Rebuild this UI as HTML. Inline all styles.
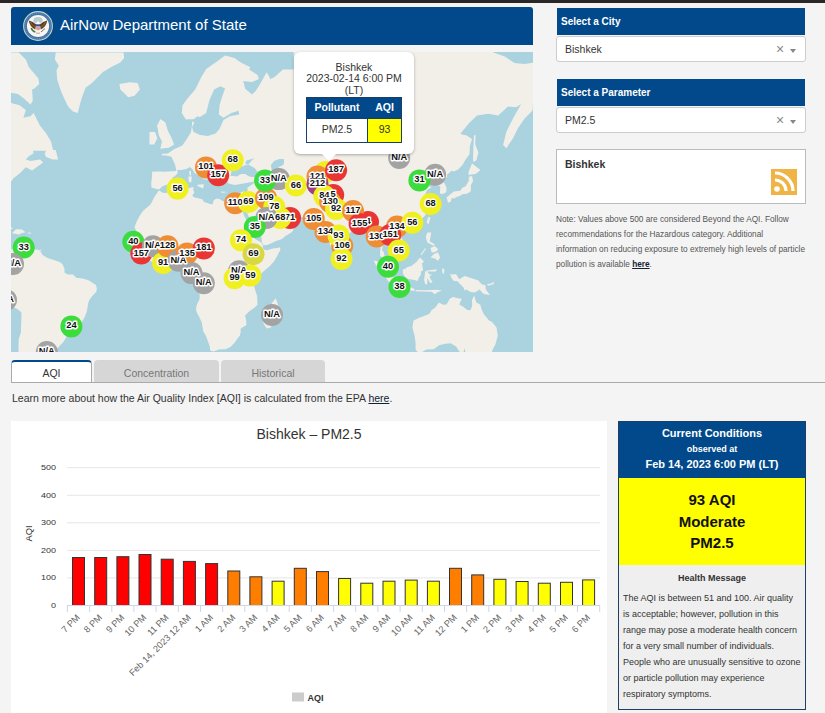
<!DOCTYPE html>
<html><head><meta charset="utf-8">
<style>
*{box-sizing:border-box;margin:0;padding:0}
html,body{width:825px;height:713px;overflow:hidden;background:#f4f4f4;font-family:"Liberation Sans",sans-serif;color:#333}
.abs{position:absolute}
#topbar{left:0;top:0;width:825px;height:3px;background:#2b2726}
#hdr{left:11px;top:7px;width:522px;height:38px;background:#01498b;border-radius:3px 3px 0 0}
#hdr .t{position:absolute;left:49px;top:8.5px;font-size:15px;color:#fff;line-height:17px;white-space:nowrap}
#map{left:11px;top:52px;width:522px;height:300px;overflow:hidden;background:#aad3df}
#popup{left:294px;top:52px;width:120px;height:102px;background:#fff;border-radius:6px;box-shadow:0 1px 3px rgba(0,0,0,.3);text-align:center;font-size:10.5px;color:#333;line-height:11.5px}
#tip{left:321.5px;top:153.5px;width:0;height:0;border-left:7.5px solid transparent;border-right:7.5px solid transparent;border-top:7px solid #fff}
.selh{left:557px;width:248px;height:27px;background:#01498b;color:#fff;font-weight:bold;font-size:10px;padding:8px 0 0 4px;line-height:11px}
.selb{left:556px;width:250px;height:26px;background:#fff;border:1px solid #ccc;border-radius:3px;font-size:10.5px;color:#333;padding:5.5px 0 0 8px;line-height:12px}
.selb .x{position:absolute;left:219px;top:4.5px;font-size:14px;color:#888;line-height:14px}
.selb .c{position:absolute;left:233px;top:11.5px;width:0;height:0;border-left:3.5px solid transparent;border-right:3.5px solid transparent;border-top:4px solid #888}
#rss{left:556px;top:149px;width:250px;height:55px;background:#fff;border:1px solid #bbb}
#rss .n{position:absolute;left:8px;top:8px;font-size:10.5px;font-weight:bold;color:#333}
#note{left:556px;top:212px;width:250px;font-size:8.25px;line-height:15px;color:#555}
#note b{color:#123;text-decoration:underline}
.tab{top:360px;height:23px;font-size:10.5px;text-align:center;line-height:13px;padding-top:6.5px;color:#777;background:#d6d6d6;border-radius:4px 4px 0 0}
#learn{left:12px;top:392px;font-size:10.5px;color:#333;white-space:nowrap;line-height:13px}
#learn u{color:#123}
#chartbox{left:11px;top:421px;width:596px;height:292px;background:#fff}
#cc{left:618px;top:421px;width:188px;height:289px;border:1px solid #1b3f66;background:#efefef}
</style></head><body>
<div id="topbar" class="abs"></div>
<div id="hdr" class="abs">
<svg class="abs" style="left:12px;top:4px" width="30" height="30" viewBox="0 0 30 30">
<circle cx="15" cy="15" r="14.4" fill="#4472a8" stroke="#b9d8c6" stroke-width="1.1"/>
<circle cx="15" cy="15" r="12.6" fill="none" stroke="#8fb0d0" stroke-width="0.6" stroke-dasharray="1 1.2"/>
<circle cx="15" cy="15" r="11.1" fill="#f7f7f2"/>
<ellipse cx="15" cy="9.3" rx="4.6" ry="3.2" fill="#b9ccd2"/>
<path d="M5.8,9.5 Q6.5,15.5 12.3,18.5 L13.2,13.5 Q10,10.5 5.8,9.5Z" fill="#5e3c1c"/>
<path d="M24.2,9.5 Q23.5,15.5 17.7,18.5 L16.8,13.5 Q20,10.5 24.2,9.5Z" fill="#5e3c1c"/>
<path d="M7.5,11 Q9,14.5 12,16" stroke="#a07a48" stroke-width="0.7" fill="none"/>
<path d="M22.5,11 Q21,14.5 18,16" stroke="#a07a48" stroke-width="0.7" fill="none"/>
<circle cx="15" cy="11.8" r="1.6" fill="#fff"/>
<rect x="12.6" y="13.3" width="4.8" height="2.2" fill="#33528c"/>
<path d="M12.6,15.5 h4.8 v2.6 q-2.4,2.8 -4.8,0 Z" fill="#e09c9a"/>
<path d="M8.2,17 q1.2,3.5 4.2,4" stroke="#4d7d3a" stroke-width="1.6" fill="none"/>
<path d="M18,21 L22,17.5" stroke="#7a6a5a" stroke-width="1" fill="none"/>
<path d="M13,21.5 h4 v1.5 h-4z" fill="#c8c0c8"/>
</svg>
<div class="t">AirNow Department of State</div>
</div>
<div id="map" class="abs"><svg width="522" height="300" viewBox="0 0 522 300" style="position:absolute;left:0;top:0">
<rect width="522" height="300" fill="#aad3df"/>
<path fill="#f2efe9" d="M148.0,137.4L144.0,136.5L140.5,135.7L140.2,131.0L141.1,124.0L141.1,119.7L147.0,119.4L153.2,119.7L165.4,119.1L164.2,113.0L160.5,104.8L155.0,103.5L150.2,103.3L151.5,101.8L156.9,101.5L163.0,97.2L171.4,93.6L176.3,86.3L179.9,80.3L181.1,73.0L181.0,68.1L174.7,67.3L170.8,61.0L171.5,53.2L176.3,46.8L184.2,37.4L190.5,24.8L195.2,16.9L204.6,10.6L214.1,3.5L223.5,5.9L229.8,10.6L239.3,15.3L238.1,17.4L246.8,23.2L247.8,27.1L241.0,30.0L232.3,29.0L234.2,36.8L241.0,42.6L244.9,38.7L249.7,31.0L255.6,20.3L257.5,23.2L259.4,27.1L263.3,25.2L272.0,17.4L282.7,17.4L282.7,-2.0L402.9,-2.0L482.3,-2.0L482.3,0.5L493.7,4.5L503.5,11.1L513.4,11.9L524.8,10.3L524.8,13.5L521.5,58.5L513.4,66.7L506.8,76.5L501.9,86.4L495.4,96.2L492.1,92.9L495.4,79.8L501.9,66.7L510.1,52.0L505.2,55.3L497.0,54.5L487.2,63.5L477.4,61.8L465.9,63.5L457.7,71.6L449.5,81.5L454.5,84.7L457.7,98.0L415.3,97.3L330.1,113.1L255.7,127.5L223.7,133.0L202.5,127.5L170.5,127.5L151.4,134.3ZM46.3,0.4L112.5,0.4L113.2,5.9L109.3,10.6L99.8,15.3L92.0,20.1L87.2,24.8L80.9,31.1L74.6,35.8L71.5,43.7L69.1,51.6L66.8,61.0L62.0,59.5L57.3,54.7L52.6,45.3L49.4,37.4L46.3,27.9L45.5,18.5L47.8,13.8L43.9,7.5L44.7,0.4ZM108.5,31.9L118.8,30.3L126.6,31.1L129.0,37.4L123.5,43.7L117.2,45.3L112.5,40.5L109.3,37.4ZM-1.0,0.4L7.7,0.4L14.8,7.5L17.9,15.3L27.4,26.4L28.2,31.9L23.4,36.6L21.1,37.4L21.8,48.4L19.5,52.4L13.2,46.8L6.9,42.1L-1.0,40.5ZM-1.0,50.8L8.5,53.2L14.8,57.9L12.4,65.8L19.5,64.2L22.6,61.0L25.8,67.3L28.9,73.6L35.2,81.5L40.0,89.4L42.3,98.8L-1.0,98.8ZM149.5,67.3L154.2,70.5L156.6,78.4L160.5,86.2L162.9,92.5L157.4,95.7L149.5,96.5L151.1,89.4L147.9,83.1L146.3,73.6ZM138.5,79.9L144.0,79.9L146.3,86.2L143.2,92.5L138.5,92.5L138.5,86.2ZM-1.0,96.4L21.1,96.4L22.6,101.2L17.9,104.3L14.8,107.5L19.5,109.0L28.9,107.5L32.1,110.6L21.1,118.5L14.8,115.3L8.5,121.6L2.2,126.4L-1.0,131.1ZM35.2,98.0L44.7,98.0L47.1,107.5L41.5,107.5L35.2,105.1L33.7,101.9ZM148.6,138.6L151.4,140.4L155.6,140.7L158.6,139.1L162.0,137.0L166.3,136.2L172.7,135.7L178.4,135.9L181.0,134.9L183.3,135.4L182.2,137.3L183.5,140.4L181.4,143.8L183.5,145.3L188.0,146.3L192.0,147.6L192.9,149.8L198.2,151.6L201.4,152.3L202.5,148.3L205.7,146.3L208.8,147.1L211.0,148.6L213.1,149.6L217.8,150.1L223.5,150.6L225.9,149.6L228.6,150.3L229.1,153.8L231.8,160.3L233.3,163.9L235.4,167.9L236.9,171.3L238.6,174.8L239.1,178.0L241.8,182.0L244.0,186.9L247.6,188.9L250.3,190.4L252.0,193.5L251.8,195.6L253.1,197.8L255.7,198.3L262.0,196.5L266.3,195.9L269.1,195.2L269.3,198.3L268.0,200.2L265.9,204.5L263.1,209.2L258.9,214.1L256.3,216.2L253.5,218.4L250.3,221.4L246.1,225.8L244.4,229.0L242.5,233.3L243.5,235.0L244.4,238.7L246.1,244.0L246.5,252.8L242.9,256.1L238.4,259.2L234.0,263.5L235.2,268.5L235.4,273.1L230.1,276.2L229.3,277.8L229.9,279.0L228.8,283.8L225.9,287.2L223.7,290.7L219.3,294.9L214.4,297.2L207.8,297.5L202.5,299.6L199.3,298.5L199.1,297.2L198.6,293.7L196.7,288.7L195.0,284.0L192.2,279.2L191.6,275.5L190.8,270.6L188.6,265.8L186.5,261.7L185.0,258.3L185.6,253.2L188.4,247.5L188.8,244.0L188.0,239.3L186.1,233.3L183.3,228.6L180.1,225.8L178.4,221.8L179.9,219.6L180.1,216.2L180.5,212.0L178.4,210.9L175.9,210.9L172.7,211.3L170.1,207.7L167.1,206.9L163.1,207.3L159.5,208.8L155.6,210.3L151.4,209.2L148.2,209.8L143.9,211.1L140.7,209.8L136.9,207.1L134.4,204.9L131.8,202.3L130.7,200.2L128.0,197.0L124.8,194.8L124.4,192.6L122.7,188.9L124.1,187.1L125.9,181.6L125.4,179.3L123.5,175.2L125.9,169.0L129.0,163.2L132.4,158.6L139.5,152.6L143.7,144.5L147.6,138.8ZM236.5,135.7L255.7,121.9L287.6,79.8L394.0,68.2L455.7,83.5L461.0,87.0L458.9,94.0L458.5,102.2L454.6,107.6L451.4,113.1L447.2,117.5L442.9,119.6L440.6,118.7L438.0,121.0L436.1,122.4L436.1,124.7L433.3,127.5L431.2,129.7L433.6,131.6L435.5,135.7L435.3,139.6L434.4,140.7L431.2,142.0L428.9,141.4L429.1,138.3L429.3,134.6L427.0,133.5L425.5,133.0L426.3,130.3L424.4,127.8L419.9,129.7L418.0,130.3L419.9,126.1L417.4,125.0L414.2,127.5L410.4,130.3L411.0,131.6L413.1,135.1L416.3,134.1L420.6,134.9L415.9,138.3L414.2,142.2L417.0,147.3L418.5,151.1L419.3,153.5L416.3,158.4L414.2,163.2L411.0,166.7L407.8,170.2L402.9,171.8L398.2,173.0L395.7,173.6L394.6,176.4L393.3,173.6L389.7,173.6L387.0,175.2L384.8,179.3L386.5,182.7L390.1,186.0L391.6,187.6L392.5,190.9L392.3,194.3L391.9,195.9L388.7,198.0L386.5,200.2L383.3,201.9L382.3,198.0L379.1,197.4L378.0,194.8L374.8,193.3L373.8,191.5L372.7,191.9L371.6,194.8L371.0,198.0L372.7,200.2L373.8,204.5L374.8,206.0L377.4,207.5L379.7,209.8L379.9,212.0L381.9,217.3L380.1,217.7L377.0,215.8L374.8,214.1L373.3,209.0L371.6,206.6L369.1,203.4L369.1,199.1L369.5,195.9L369.5,191.5L368.0,189.3L367.6,184.9L364.6,184.2L363.1,186.5L360.4,186.0L360.6,181.6L358.9,178.2L356.7,176.4L355.7,173.9L355.3,171.8L353.5,171.3L351.4,172.5L347.8,173.2L345.0,173.6L344.6,175.9L341.8,178.2L337.2,182.2L333.3,185.3L330.6,187.1L330.8,192.4L329.7,195.9L328.7,198.5L326.3,201.7L324.8,203.2L323.8,202.3L322.1,199.1L320.6,195.9L319.1,192.8L316.9,187.1L315.2,182.7L314.8,179.3L314.4,174.1L310.6,175.5L308.9,171.3L306.7,171.8L305.7,169.5L303.5,168.3L302.5,166.0L301.4,164.6L297.2,165.1L292.5,165.3L290.8,165.1L285.5,164.6L281.8,163.7L279.7,160.3L275.9,161.8L272.7,161.3L269.5,158.6L268.0,156.0L264.2,153.0L262.0,152.6L262.0,154.8L263.1,157.2L264.2,159.6L266.3,162.0L267.4,165.5L268.9,162.9L269.5,164.4L269.7,167.2L271.6,167.4L274.8,167.4L277.6,164.8L279.7,162.2L279.7,165.8L281.2,167.9L284.6,168.8L287.2,171.3L283.3,175.9L281.2,179.8L278.0,182.0L274.8,183.8L271.0,186.9L264.4,189.3L259.9,191.5L255.7,193.0L252.5,193.3L251.0,190.4L250.3,184.9L246.1,179.3L243.3,173.6L238.6,166.7L236.1,160.8L234.0,158.4L234.2,154.8L229.1,153.8ZM264.8,246.2L267.4,253.9L265.9,257.2L263.7,263.9L262.0,268.5L259.9,275.5L255.7,276.6L252.7,272.0L252.0,267.4L254.4,262.8L253.5,257.2L258.9,254.5L262.0,249.5ZM-10.3,201.3L-4.0,202.3L-0.8,198.0L2.4,196.5L6.7,194.3L7.7,197.0L8.8,195.2L10.9,195.9L15.2,198.0L19.5,197.8L25.8,197.6L28.0,198.0L30.1,200.2L31.2,202.8L36.5,206.0L42.9,207.9L48.6,210.1L51.4,212.0L53.5,216.7L53.5,220.5L56.7,222.6L62.0,222.6L65.2,225.8L72.7,226.7L78.0,228.4L82.2,231.2L85.0,232.9L85.8,235.9L85.4,239.7L81.2,244.0L78.0,248.4L76.9,252.8L75.8,259.4L73.7,265.1L70.5,270.8L68.0,270.8L64.1,272.7L59.9,275.0L56.7,279.0L56.1,283.8L52.4,289.9L49.2,293.2L46.1,296.7L43.9,299.6L40.7,299.8L38.6,300.1L35.4,297.5L36.5,302.7L7.5,302.7L7.5,294.9L7.7,287.5L9.9,280.2L10.1,272.0L10.5,263.9L10.3,260.3L6.7,257.2L0.3,253.9L-2.5,249.5L-5.0,246.2L-8.2,237.6L-12.5,231.2L-12.5,224.8L-10.3,220.5L-10.3,216.2L-8.2,216.2L-6.1,205.6ZM403.6,268.0L408.9,265.5L413.1,263.9L418.5,261.7L420.6,257.9L423.8,255.9L428.0,250.6L432.3,252.8L435.5,252.6L438.7,246.7L441.9,245.1L448.2,246.4L450.8,246.7L448.2,252.6L452.5,255.0L456.3,257.9L459.5,258.3L461.2,253.9L461.0,248.0L463.1,243.4L465.3,250.6L469.3,252.8L470.6,257.2L472.7,262.1L478.0,268.5L480.8,269.7L485.5,275.5L486.8,283.8L484.4,292.4L481.9,297.0L479.1,305.3L472.7,308.0L466.3,308.0L459.9,308.0L456.8,302.2L454.6,301.4L453.6,296.2L452.5,300.1L448.5,299.8L445.1,294.4L439.7,291.2L434.4,291.7L428.0,293.2L422.7,297.2L415.3,297.5L411.0,300.1L406.7,300.1L404.6,297.5L404.6,291.2L403.6,283.8L401.4,275.5L402.5,268.5ZM438.7,222.6L445.1,222.2L448.2,227.3L453.6,223.9L459.9,226.0L467.4,228.6L470.6,232.2L474.4,233.3L474.8,237.6L479.1,243.0L472.7,241.9L468.5,237.6L465.3,239.7L463.1,240.4L458.9,239.7L455.7,237.6L453.6,238.4L452.5,235.4L446.1,229.0L442.9,229.0L440.8,226.5L439.7,223.7ZM391.9,217.3L394.0,216.9L396.1,215.2L400.4,213.9L405.7,209.8L408.9,205.6L413.1,209.4L411.0,211.3L412.1,218.4L409.9,219.4L409.9,222.6L407.8,225.8L406.7,229.0L403.6,228.0L397.2,226.9L394.0,224.8L391.9,221.6ZM362.7,208.6L367.4,209.4L373.3,215.2L380.1,221.6L382.3,224.8L385.5,227.3L385.0,232.9L382.3,233.1L377.0,229.0L373.3,222.6L369.5,216.9L364.8,213.0ZM383.8,235.0L385.5,233.1L390.8,234.4L396.1,234.1L399.7,235.2L403.6,237.1L403.3,239.1L396.1,238.0L389.7,237.1L384.4,235.4ZM404.6,238.0L413.1,238.2L420.6,238.0L425.9,237.8L430.8,238.4L425.9,240.4L423.8,242.3L420.6,239.7L413.1,239.5L404.6,239.3ZM413.1,228.0L414.2,219.4L416.3,218.4L425.9,217.3L424.8,219.4L416.3,219.4L418.5,222.6L421.6,222.4L418.5,224.3L419.5,226.9L421.6,230.1L419.5,231.2L417.4,228.0L416.3,225.8L416.3,232.2L414.2,232.2ZM431.2,216.2L433.3,217.3L433.3,220.5L431.9,222.2L431.2,219.4ZM475.9,232.2L480.2,231.6L483.4,229.4L482.3,232.2L477.0,233.7ZM416.3,180.4L420.2,180.4L419.5,184.9L418.7,189.3L423.8,192.6L422.7,193.7L416.3,190.4L414.8,185.3ZM419.5,205.6L422.7,202.3L427.0,200.2L429.1,205.6L427.0,208.8L423.8,206.6ZM419.5,195.9L423.8,194.1L427.0,197.0L425.9,199.1L422.7,200.6L420.6,200.2ZM409.5,202.8L414.2,195.9L414.8,197.0L410.6,203.0ZM417.4,164.8L419.5,165.5L417.4,172.5L415.7,170.2ZM391.0,178.9L395.0,176.8L396.1,178.0L392.9,181.1ZM329.7,199.5L332.7,202.3L334.2,205.6L332.3,207.7L330.1,207.7L329.5,203.4ZM435.5,145.3L438.2,143.5L438.7,142.7L442.9,139.6L449.3,138.8L451.4,135.7L454.6,134.3L457.8,128.9L457.8,124.7L461.0,123.9L462.1,128.9L459.9,133.0L459.9,137.0L459.5,139.6L457.4,140.9L455.3,141.7L451.4,142.2L448.2,144.3L446.1,144.8L442.9,146.6L440.8,146.1L439.7,149.8L438.7,150.3L437.0,150.6L436.1,147.3ZM457.8,123.3L457.4,120.4L461.0,111.5L466.3,115.5L469.5,118.1L464.6,121.9L459.9,122.4ZM462.1,103.8L462.5,92.3L463.1,82.7L464.6,83.5L464.2,92.3L467.4,100.6L465.3,108.5L462.1,110.0ZM1.4,180.7L5.0,177.3L10.9,177.5L14.6,180.2L10.9,181.1L7.7,182.5L1.4,181.3ZM16.9,180.4L20.3,180.7L20.1,181.6L16.9,181.6ZM-10.3,170.2L-4.0,172.5L2.2,176.6L-1.8,177.3L-5.4,177.3L-10.3,173.6ZM28.2,198.9L30.3,197.4L30.1,199.1L28.2,199.1Z"/>
<path fill="#aad3df" d="M176.3,67.3L182.6,67.3L186.5,64.2L188.9,65.0L195.2,61.0L198.3,48.4L203.1,37.4L209.4,34.2L214.1,36.6L210.9,45.3L208.6,53.2L207.8,62.6L212.5,65.8L220.4,61.0L227.5,58.7L228.3,62.6L218.8,64.2L212.5,68.1L208.6,76.8L204.6,81.5L196.8,83.9L188.9,83.1L182.6,79.9L181.0,75.2L183.4,70.5ZM148.0,138.3L150.3,136.5L155.6,136.2L158.8,132.2L160.3,128.9L161.6,125.5L164.6,123.6L166.7,121.0L166.3,118.1L170.1,118.1L175.4,116.9L178.8,114.9L181.8,117.5L183.3,120.7L186.5,122.4L190.1,125.3L193.3,127.5L193.9,133.0L196.1,130.3L196.5,126.1L199.3,127.2L196.1,124.4L193.5,122.1L189.7,120.4L188.2,116.6L186.1,114.6L186.1,111.9L189.3,111.2L190.8,113.1L193.9,117.5L198.4,120.1L201.4,122.4L201.2,126.7L202.9,129.2L204.6,132.2L206.1,136.2L207.8,137.3L208.8,134.6L211.0,133.0L209.5,129.7L208.0,126.1L211.0,125.3L215.2,125.3L216.3,126.7L215.9,128.9L217.4,131.9L218.2,135.7L219.9,136.5L225.2,135.9L229.7,138.0L233.5,136.2L236.9,136.7L236.1,139.6L235.4,143.8L234.4,146.6L233.7,149.1L232.7,150.3L228.6,150.3L225.9,149.6L223.5,150.6L217.8,150.1L213.1,149.6L211.0,148.6L208.8,147.1L205.7,146.3L202.5,148.3L201.4,152.3L198.2,151.6L192.9,149.8L192.0,147.6L188.0,146.3L183.5,145.3L181.4,143.8L183.5,140.4L182.2,137.3L183.3,135.4L181.0,134.9L178.4,135.9L172.7,135.7L166.3,136.2L162.0,137.0L158.6,139.1L155.6,140.7L151.4,140.4L148.6,138.6ZM219.5,124.1L220.8,117.8L221.0,115.2L223.1,112.5L225.2,108.5L228.0,108.5L231.2,110.0L229.1,111.9L231.2,114.6L235.4,112.8L237.6,112.5L240.8,114.6L242.9,115.5L245.0,117.8L248.4,123.0L245.0,125.0L240.8,125.0L237.1,123.9L234.4,121.9L230.1,122.1L225.9,124.4L222.0,124.1ZM235.4,108.5L240.8,106.9L243.3,106.3L240.8,108.5L237.8,111.9L235.4,112.2L234.4,110.9ZM259.9,113.1L263.1,109.1L264.2,108.5L268.4,106.9L272.7,106.9L273.1,109.1L272.7,112.5L269.1,114.6L267.4,114.9L269.1,118.4L271.6,121.9L272.3,124.1L274.8,125.3L273.7,127.5L274.4,131.6L274.4,134.9L268.4,136.5L265.2,134.9L264.0,131.6L265.2,126.9L266.9,126.7L265.2,125.5L262.0,121.9L261.0,119.0L260.3,115.7ZM262.0,153.0L264.2,153.3L267.4,155.5L269.5,158.6L272.7,161.3L275.9,161.8L279.7,160.3L280.1,162.5L279.7,164.4L277.6,164.8L274.8,167.4L271.6,167.4L269.7,167.2L269.5,164.4L268.9,162.9L267.4,165.5L266.3,162.0L264.2,159.6L263.1,157.2Z"/>
<path fill="#f2efe9" d="M186.3,132.7L193.1,132.2L192.0,136.5L186.5,134.1ZM177.3,124.4L180.8,124.4L180.3,130.3L178.0,130.3ZM178.2,119.0L179.9,119.0L180.1,123.6L178.6,123.3ZM209.9,139.4L215.9,140.1L211.0,140.9ZM228.6,140.9L233.5,139.1L231.2,142.0L228.8,141.7ZM149.5,67.3L154.2,70.5L156.6,78.4L160.5,86.2L162.9,92.5L157.4,95.7L149.5,96.5L151.1,89.4L147.9,83.1L146.3,73.6Z"/>
</svg><svg width="522" height="300" style="position:absolute;left:0;top:0">
<circle cx="12.7" cy="195.5" r="11" fill="#3ddc3d"/>
<circle cx="2.0" cy="212.0" r="11" fill="#a3a3a3"/>
<circle cx="-5.0" cy="248.0" r="11" fill="#a3a3a3"/>
<circle cx="60.4" cy="274.4" r="11" fill="#3ddc3d"/>
<circle cx="35.8" cy="300.0" r="11" fill="#a3a3a3"/>
<circle cx="122.3" cy="189.8" r="11" fill="#3ddc3d"/>
<circle cx="130.3" cy="201.5" r="11" fill="#ea3535"/>
<circle cx="141.9" cy="194.2" r="11" fill="#a3a3a3"/>
<circle cx="152.1" cy="210.9" r="11" fill="#f0f020"/>
<circle cx="156.5" cy="194.2" r="11" fill="#ee8d34"/>
<circle cx="167.4" cy="208.7" r="11" fill="#a3a3a3"/>
<circle cx="176.1" cy="201.5" r="11" fill="#ee8d34"/>
<circle cx="192.8" cy="196.4" r="11" fill="#ea3535"/>
<circle cx="180.5" cy="221.1" r="11" fill="#a3a3a3"/>
<circle cx="192.8" cy="231.3" r="11" fill="#a3a3a3"/>
<circle cx="166.6" cy="136.6" r="11" fill="#f0f020"/>
<circle cx="195.0" cy="115.4" r="11" fill="#ee8d34"/>
<circle cx="207.2" cy="123.3" r="11" fill="#ea3535"/>
<circle cx="221.7" cy="108.2" r="11" fill="#f0f020"/>
<circle cx="224.2" cy="151.2" r="11" fill="#ee8d34"/>
<circle cx="237.5" cy="150.0" r="11" fill="#f0f020"/>
<circle cx="255.0" cy="146.3" r="11" fill="#ee8d34"/>
<circle cx="267.8" cy="127.1" r="11" fill="#a3a3a3"/>
<circle cx="254.0" cy="128.6" r="11" fill="#3ddc3d"/>
<circle cx="284.9" cy="133.5" r="11" fill="#f0f020"/>
<circle cx="263.3" cy="155.1" r="11" fill="#f0f020"/>
<circle cx="279.0" cy="165.9" r="11" fill="#ea3535"/>
<circle cx="269.2" cy="165.9" r="11" fill="#f0f020"/>
<circle cx="255.5" cy="165.9" r="11" fill="#a3a3a3"/>
<circle cx="243.8" cy="175.0" r="11" fill="#3ddc3d"/>
<circle cx="229.9" cy="188.3" r="11" fill="#f0f020"/>
<circle cx="242.5" cy="202.2" r="11" fill="#d8d840"/>
<circle cx="228.0" cy="219.2" r="11" fill="#a3a3a3"/>
<circle cx="223.6" cy="226.2" r="11" fill="#f0f020"/>
<circle cx="239.4" cy="223.6" r="11" fill="#f0f020"/>
<circle cx="261.0" cy="263.0" r="11" fill="#a3a3a3"/>
<circle cx="302.7" cy="166.9" r="11" fill="#ee8d34"/>
<circle cx="314.5" cy="120.0" r="11" fill="#f0f020"/>
<circle cx="306.5" cy="124.5" r="11" fill="#ee8d34"/>
<circle cx="306.5" cy="132.3" r="11" fill="#a0407e"/>
<circle cx="325.1" cy="118.3" r="11" fill="#ea3535"/>
<circle cx="322.2" cy="143.1" r="11" fill="#ea3535"/>
<circle cx="313.3" cy="144.1" r="11" fill="#f0f020"/>
<circle cx="319.2" cy="150.0" r="11" fill="#ee8d34"/>
<circle cx="325.1" cy="156.9" r="11" fill="#f0f020"/>
<circle cx="357.0" cy="170.0" r="11" fill="#ea3535"/>
<circle cx="342.0" cy="159.0" r="11" fill="#ee8d34"/>
<circle cx="348.6" cy="172.0" r="11" fill="#ea3535"/>
<circle cx="331.2" cy="193.8" r="11" fill="#ee8d34"/>
<circle cx="314.5" cy="180.0" r="11" fill="#ee8d34"/>
<circle cx="327.5" cy="183.6" r="11" fill="#f0f020"/>
<circle cx="330.5" cy="206.9" r="11" fill="#f0f020"/>
<circle cx="365.7" cy="184.5" r="11" fill="#ee8d34"/>
<circle cx="386.0" cy="174.6" r="11" fill="#ee8d34"/>
<circle cx="379.2" cy="183.0" r="11" fill="#ea3535"/>
<circle cx="401.3" cy="170.8" r="11" fill="#f0f020"/>
<circle cx="387.7" cy="198.5" r="11" fill="#f0f020"/>
<circle cx="377.0" cy="214.8" r="11" fill="#3ddc3d"/>
<circle cx="388.5" cy="235.0" r="11" fill="#3ddc3d"/>
<circle cx="388.2" cy="106.0" r="11" fill="#a3a3a3"/>
<circle cx="424.1" cy="122.8" r="11" fill="#a3a3a3"/>
<circle cx="408.4" cy="128.4" r="11" fill="#3ddc3d"/>
<circle cx="419.6" cy="152.0" r="11" fill="#f0f020"/>
<g font-family="Liberation Sans" font-weight="bold" font-size="9.3" text-anchor="middle" fill="#111" stroke="#fff" stroke-width="2.8" stroke-linejoin="round" paint-order="stroke">
<text x="12.7" y="197.5">33</text>
<text x="2.0" y="214.0">N/A</text>
<text x="-5.0" y="250.0">N/A</text>
<text x="60.4" y="276.4">24</text>
<text x="35.8" y="302.0">N/A</text>
<text x="122.3" y="191.8">40</text>
<text x="130.3" y="203.5">157</text>
<text x="141.9" y="196.2">N/A</text>
<text x="152.1" y="212.9">91</text>
<text x="156.5" y="196.2">128</text>
<text x="167.4" y="210.7">N/A</text>
<text x="176.1" y="203.5">135</text>
<text x="192.8" y="198.4">181</text>
<text x="180.5" y="223.1">N/A</text>
<text x="192.8" y="233.3">N/A</text>
<text x="166.6" y="138.6">56</text>
<text x="195.0" y="117.4">101</text>
<text x="207.2" y="125.3">157</text>
<text x="221.7" y="110.2">68</text>
<text x="224.2" y="153.2">110</text>
<text x="237.5" y="152.0">69</text>
<text x="255.0" y="148.3">109</text>
<text x="267.8" y="129.1">N/A</text>
<text x="254.0" y="130.6">33</text>
<text x="284.9" y="135.5">66</text>
<text x="263.3" y="157.1">78</text>
<text x="279.0" y="167.9">71</text>
<text x="269.2" y="167.9">68</text>
<text x="255.5" y="167.9">N/A</text>
<text x="243.8" y="177.0">35</text>
<text x="229.9" y="190.3">74</text>
<text x="242.5" y="204.2">69</text>
<text x="228.0" y="221.2">N/A</text>
<text x="223.6" y="228.2">99</text>
<text x="239.4" y="225.6">59</text>
<text x="261.0" y="265.0">N/A</text>
<text x="302.7" y="168.9">105</text>
<text x="306.5" y="126.5">121</text>
<text x="306.5" y="134.3">212</text>
<text x="325.1" y="120.3">187</text>
<text x="322.2" y="145.1">5</text>
<text x="313.3" y="146.1">84</text>
<text x="319.2" y="152.0">130</text>
<text x="325.1" y="158.9">92</text>
<text x="357.0" y="172.0">4</text>
<text x="342.0" y="161.0">117</text>
<text x="348.6" y="174.0">155</text>
<text x="331.2" y="195.8">106</text>
<text x="314.5" y="182.0">134</text>
<text x="327.5" y="185.6">93</text>
<text x="330.5" y="208.9">92</text>
<text x="365.7" y="186.5">130</text>
<text x="386.0" y="176.6">134</text>
<text x="379.2" y="185.0">151</text>
<text x="401.3" y="172.8">56</text>
<text x="387.7" y="200.5">65</text>
<text x="377.0" y="216.8">40</text>
<text x="388.5" y="237.0">38</text>
<text x="388.2" y="108.0">N/A</text>
<text x="424.1" y="124.8">N/A</text>
<text x="408.4" y="130.4">31</text>
<text x="419.6" y="154.0">68</text>
</g></svg></div>
<div id="popup" class="abs">
<div style="padding-top:9.5px">Bishkek<br>2023-02-14 6:00 PM<br>(LT)</div>
<table style="position:absolute;left:12px;top:45px;width:96px;border-collapse:collapse;font-size:10.5px">
<tr style="background:#01498b;color:#fff;font-weight:bold;height:20.5px"><td style="border:1px solid #1a3f66;border-right-color:#01498b;width:61px">Pollutant</td><td style="border:1px solid #1a3f66;border-left-color:#01498b">AQI</td></tr>
<tr style="height:24px"><td style="border:1px solid #1a3f66;color:#333">PM2.5</td><td style="border:1px solid #1a3f66;background:#ffff00;color:#333">93</td></tr>
</table>
</div>
<div id="tip" class="abs"></div>

<div class="abs selh" style="top:8px">Select a City</div>
<div class="abs selb" style="top:36px">Bishkek<span class="x">×</span><span class="c"></span></div>
<div class="abs selh" style="top:79px">Select a Parameter</div>
<div class="abs selb" style="top:107px">PM2.5<span class="x">×</span><span class="c"></span></div>
<div id="rss" class="abs"><div class="n">Bishkek</div>
<svg class="abs" style="left:214px;top:19px" width="26" height="26" viewBox="0 0 26 26"><rect width="26" height="26" fill="#efb444"/><circle cx="6" cy="20" r="2.8" fill="#fff"/><path d="M4,11 A11,11 0 0 1 15,22" stroke="#fff" stroke-width="3.2" fill="none"/><path d="M4,4 A18,18 0 0 1 22,22" stroke="#fff" stroke-width="3.2" fill="none"/></svg>
</div>
<div id="note" class="abs">Note: Values above 500 are considered Beyond the AQI. Follow recommendations for the Hazardous category. Additional information on reducing exposure to extremely high levels of particle pollution is available <b>here</b>.</div>

<div class="abs tab" style="left:11px;width:81px;background:#fff;border:1px solid #aaa;border-top:2px solid #01498b;border-bottom:none;color:#333;padding-top:5px">AQI</div>
<div class="abs tab" style="left:94px;width:125px">Concentration</div>
<div class="abs tab" style="left:221px;width:104px">Historical</div>
<div class="abs" style="left:11px;top:382px;width:814px;height:1px;background:#aaa"></div>
<div id="learn" class="abs">Learn more about how the Air Quality Index [AQI] is calculated from the EPA <u>here</u>.</div>

<div id="chartbox" class="abs"><svg width="596" height="292" viewBox="11 421 596 292" style="position:absolute;left:0;top:0" font-family="Liberation Sans">
<text x="309" y="438.8" text-anchor="middle" font-size="14" fill="#333">Bishkek – PM2.5</text>
<rect x="67" y="577.4" width="533" height="1" fill="#e6e6e6"/>
<rect x="67" y="549.9" width="533" height="1" fill="#e6e6e6"/>
<rect x="67" y="522.3" width="533" height="1" fill="#e6e6e6"/>
<rect x="67" y="494.8" width="533" height="1" fill="#e6e6e6"/>
<rect x="67" y="467.2" width="533" height="1" fill="#e6e6e6"/>
<text x="51.0" y="607.7" font-size="8" fill="#333" textLength="5" lengthAdjust="spacingAndGlyphs">0</text>
<text x="41.0" y="580.1" font-size="8" fill="#333" textLength="15" lengthAdjust="spacingAndGlyphs">100</text>
<text x="41.0" y="552.6" font-size="8" fill="#333" textLength="15" lengthAdjust="spacingAndGlyphs">200</text>
<text x="41.0" y="525.0" font-size="8" fill="#333" textLength="15" lengthAdjust="spacingAndGlyphs">300</text>
<text x="41.0" y="497.5" font-size="8" fill="#333" textLength="15" lengthAdjust="spacingAndGlyphs">400</text>
<text x="41.0" y="469.9" font-size="8" fill="#333" textLength="15" lengthAdjust="spacingAndGlyphs">500</text>
<text transform="translate(31.8,525.5) rotate(-90)" x="-16" font-size="8.6" fill="#333" textLength="16" lengthAdjust="spacingAndGlyphs">AQI</text>
<rect x="72.5" y="557.5" width="12" height="48.0" fill="#ff0000" stroke="#333" stroke-width="1"/>
<rect x="94.7" y="557.5" width="12" height="48.0" fill="#ff0000" stroke="#333" stroke-width="1"/>
<rect x="116.9" y="556.7" width="12" height="48.8" fill="#ff0000" stroke="#333" stroke-width="1"/>
<rect x="139.0" y="554.5" width="12" height="51.0" fill="#ff0000" stroke="#333" stroke-width="1"/>
<rect x="161.2" y="559.2" width="12" height="46.3" fill="#ff0000" stroke="#333" stroke-width="1"/>
<rect x="183.4" y="561.4" width="12" height="44.1" fill="#ff0000" stroke="#333" stroke-width="1"/>
<rect x="205.6" y="563.6" width="12" height="41.9" fill="#ff0000" stroke="#333" stroke-width="1"/>
<rect x="227.8" y="571.0" width="12" height="34.5" fill="#ff7e00" stroke="#333" stroke-width="1"/>
<rect x="249.9" y="576.8" width="12" height="28.7" fill="#ff7e00" stroke="#333" stroke-width="1"/>
<rect x="272.1" y="581.2" width="12" height="24.3" fill="#ffff00" stroke="#333" stroke-width="1"/>
<rect x="294.3" y="568.3" width="12" height="37.2" fill="#ff7e00" stroke="#333" stroke-width="1"/>
<rect x="316.5" y="571.6" width="12" height="33.9" fill="#ff7e00" stroke="#333" stroke-width="1"/>
<rect x="338.6" y="578.5" width="12" height="27.0" fill="#ffff00" stroke="#333" stroke-width="1"/>
<rect x="360.8" y="583.2" width="12" height="22.3" fill="#ffff00" stroke="#333" stroke-width="1"/>
<rect x="383.0" y="581.2" width="12" height="24.3" fill="#ffff00" stroke="#333" stroke-width="1"/>
<rect x="405.2" y="580.1" width="12" height="25.4" fill="#ffff00" stroke="#333" stroke-width="1"/>
<rect x="427.4" y="581.2" width="12" height="24.3" fill="#ffff00" stroke="#333" stroke-width="1"/>
<rect x="449.5" y="568.3" width="12" height="37.2" fill="#ff7e00" stroke="#333" stroke-width="1"/>
<rect x="471.7" y="574.9" width="12" height="30.6" fill="#ff7e00" stroke="#333" stroke-width="1"/>
<rect x="493.9" y="579.3" width="12" height="26.2" fill="#ffff00" stroke="#333" stroke-width="1"/>
<rect x="516.1" y="581.5" width="12" height="24.0" fill="#ffff00" stroke="#333" stroke-width="1"/>
<rect x="538.3" y="583.2" width="12" height="22.3" fill="#ffff00" stroke="#333" stroke-width="1"/>
<rect x="560.5" y="582.3" width="12" height="23.2" fill="#ffff00" stroke="#333" stroke-width="1"/>
<rect x="582.6" y="579.9" width="12" height="25.6" fill="#ffff00" stroke="#333" stroke-width="1"/>
<rect x="67" y="605" width="533" height="1" fill="#ccd6eb"/>
<rect x="66.9" y="605" width="1" height="7" fill="#ccd6eb"/>
<rect x="89.1" y="605" width="1" height="7" fill="#ccd6eb"/>
<rect x="111.3" y="605" width="1" height="7" fill="#ccd6eb"/>
<rect x="133.4" y="605" width="1" height="7" fill="#ccd6eb"/>
<rect x="155.6" y="605" width="1" height="7" fill="#ccd6eb"/>
<rect x="177.8" y="605" width="1" height="7" fill="#ccd6eb"/>
<rect x="200.0" y="605" width="1" height="7" fill="#ccd6eb"/>
<rect x="222.2" y="605" width="1" height="7" fill="#ccd6eb"/>
<rect x="244.3" y="605" width="1" height="7" fill="#ccd6eb"/>
<rect x="266.5" y="605" width="1" height="7" fill="#ccd6eb"/>
<rect x="288.7" y="605" width="1" height="7" fill="#ccd6eb"/>
<rect x="310.9" y="605" width="1" height="7" fill="#ccd6eb"/>
<rect x="333.1" y="605" width="1" height="7" fill="#ccd6eb"/>
<rect x="355.2" y="605" width="1" height="7" fill="#ccd6eb"/>
<rect x="377.4" y="605" width="1" height="7" fill="#ccd6eb"/>
<rect x="399.6" y="605" width="1" height="7" fill="#ccd6eb"/>
<rect x="421.8" y="605" width="1" height="7" fill="#ccd6eb"/>
<rect x="444.0" y="605" width="1" height="7" fill="#ccd6eb"/>
<rect x="466.1" y="605" width="1" height="7" fill="#ccd6eb"/>
<rect x="488.3" y="605" width="1" height="7" fill="#ccd6eb"/>
<rect x="510.5" y="605" width="1" height="7" fill="#ccd6eb"/>
<rect x="532.7" y="605" width="1" height="7" fill="#ccd6eb"/>
<rect x="554.9" y="605" width="1" height="7" fill="#ccd6eb"/>
<rect x="577.0" y="605" width="1" height="7" fill="#ccd6eb"/>
<rect x="599.2" y="605" width="1" height="7" fill="#ccd6eb"/>
<text transform="translate(80.5,618) rotate(-45)" text-anchor="end" font-size="9.2" fill="#666">7 PM</text>
<text transform="translate(102.7,618) rotate(-45)" text-anchor="end" font-size="9.2" fill="#666">8 PM</text>
<text transform="translate(124.9,618) rotate(-45)" text-anchor="end" font-size="9.2" fill="#666">9 PM</text>
<text transform="translate(147.0,618) rotate(-45)" text-anchor="end" font-size="9.2" fill="#666">10 PM</text>
<text transform="translate(169.2,618) rotate(-45)" text-anchor="end" font-size="9.2" fill="#666">11 PM</text>
<text transform="translate(191.4,618) rotate(-45)" text-anchor="end" font-size="9.2" fill="#666">Feb 14, 2023 12 AM</text>
<text transform="translate(213.6,618) rotate(-45)" text-anchor="end" font-size="9.2" fill="#666">1 AM</text>
<text transform="translate(235.8,618) rotate(-45)" text-anchor="end" font-size="9.2" fill="#666">2 AM</text>
<text transform="translate(257.9,618) rotate(-45)" text-anchor="end" font-size="9.2" fill="#666">3 AM</text>
<text transform="translate(280.1,618) rotate(-45)" text-anchor="end" font-size="9.2" fill="#666">4 AM</text>
<text transform="translate(302.3,618) rotate(-45)" text-anchor="end" font-size="9.2" fill="#666">5 AM</text>
<text transform="translate(324.5,618) rotate(-45)" text-anchor="end" font-size="9.2" fill="#666">6 AM</text>
<text transform="translate(346.6,618) rotate(-45)" text-anchor="end" font-size="9.2" fill="#666">7 AM</text>
<text transform="translate(368.8,618) rotate(-45)" text-anchor="end" font-size="9.2" fill="#666">8 AM</text>
<text transform="translate(391.0,618) rotate(-45)" text-anchor="end" font-size="9.2" fill="#666">9 AM</text>
<text transform="translate(413.2,618) rotate(-45)" text-anchor="end" font-size="9.2" fill="#666">10 AM</text>
<text transform="translate(435.4,618) rotate(-45)" text-anchor="end" font-size="9.2" fill="#666">11 AM</text>
<text transform="translate(457.5,618) rotate(-45)" text-anchor="end" font-size="9.2" fill="#666">12 PM</text>
<text transform="translate(479.7,618) rotate(-45)" text-anchor="end" font-size="9.2" fill="#666">1 PM</text>
<text transform="translate(501.9,618) rotate(-45)" text-anchor="end" font-size="9.2" fill="#666">2 PM</text>
<text transform="translate(524.1,618) rotate(-45)" text-anchor="end" font-size="9.2" fill="#666">3 PM</text>
<text transform="translate(546.3,618) rotate(-45)" text-anchor="end" font-size="9.2" fill="#666">4 PM</text>
<text transform="translate(568.5,618) rotate(-45)" text-anchor="end" font-size="9.2" fill="#666">5 PM</text>
<text transform="translate(590.6,618) rotate(-45)" text-anchor="end" font-size="9.2" fill="#666">6 PM</text>
<rect x="292" y="692.5" width="12" height="9" fill="#ccc"/>
<text x="307.5" y="701" font-size="9" font-weight="bold" fill="#333">AQI</text>
</svg></div>
<div id="cc" class="abs">
<div style="background:#01498b;color:#fff;font-weight:bold;text-align:center;height:56px;padding-top:4.5px">
<div style="font-size:11px;line-height:13px">Current Conditions</div>
<div style="font-size:9px;line-height:18.5px">observed at</div>
<div style="font-size:11px;line-height:13px">Feb 14, 2023 6:00 PM (LT)</div>
</div>
<div style="background:#ffff00;color:#111;font-weight:bold;text-align:center;height:87px;font-size:15px;line-height:21.5px;padding-top:11px">93 AQI<br>Moderate<br>PM2.5</div>
<div style="padding:5px 4px 0 4px;font-size:9px;line-height:16px;color:#333">
<div style="text-align:center;font-weight:bold;margin-bottom:4px">Health Message</div>
The AQI is between 51 and 100. Air quality is acceptable; however, pollution in this range may pose a moderate health concern for a very small number of individuals. People who are unusually sensitive to ozone or particle pollution may experience respiratory symptoms.
</div>
</div>
</body></html>
